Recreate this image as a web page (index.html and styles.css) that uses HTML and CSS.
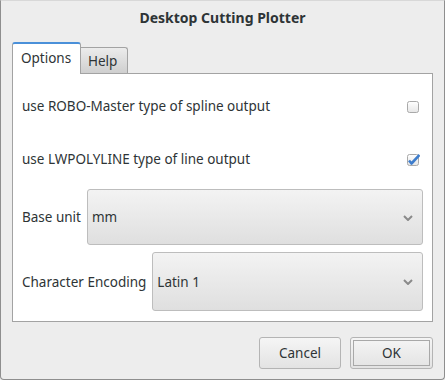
FILE: index.html
```html
<!DOCTYPE html>
<html>
<head>
<meta charset="utf-8">
<link rel="stylesheet" href="styles.css">
</head>
<body>
<div class="window">
  <div class="titlebar">Desktop Cutting Plotter</div>
  <div class="tabs">
    <div class="tab active">Options</div>
    <div class="tab">Help</div>
  </div>
  <div class="panel">
    <div class="row check-row r1">
      <span class="label">use ROBO-Master type of spline output</span>
      <svg class="checkbox" width="14" height="14" viewBox="0 0 14 14">
        <defs>
          <linearGradient id="cb1" x1="0" y1="0" x2="0" y2="1">
            <stop offset="0" stop-color="#ffffff"/>
            <stop offset="1" stop-color="#e6e6e6"/>
          </linearGradient>
        </defs>
        <rect x="1.5" y="1.5" width="11" height="11" rx="2" fill="url(#cb1)" stroke="#a9a9a9"/>
      </svg>
    </div>
    <div class="row check-row r2">
      <span class="label">use LWPOLYLINE type of line output</span>
      <svg class="checkbox" width="14" height="14" viewBox="0 0 14 14">
        <defs>
          <linearGradient id="cb2" x1="0" y1="0" x2="0" y2="1">
            <stop offset="0" stop-color="#ffffff"/>
            <stop offset="1" stop-color="#e6e6e6"/>
          </linearGradient>
        </defs>
        <rect x="1.5" y="1.5" width="11" height="11" rx="2" fill="url(#cb2)" stroke="#a9a9a9"/>
        <path d="M3 7.5 L5.5 10.5 L13.5 2" fill="none" stroke="#3e7dcc" stroke-width="2.6" stroke-linejoin="round"/>
      </svg>
    </div>
    <div class="row combo-row c1">
      <span class="label">Base unit</span>
      <div class="combo">
        <span>mm</span>
        <svg width="10" height="6" viewBox="0 0 10 6"><polyline points="1,1 5,5 9,1" fill="none" stroke="#8a8a8a" stroke-width="2"/></svg>
      </div>
    </div>
    <div class="row combo-row c2">
      <span class="label">Character Encoding</span>
      <div class="combo">
        <span>Latin 1</span>
        <svg width="10" height="6" viewBox="0 0 10 6"><polyline points="1,1 5,5 9,1" fill="none" stroke="#8a8a8a" stroke-width="2"/></svg>
      </div>
    </div>
  </div>
  <div class="buttons">
    <div class="btn">Cancel</div>
    <div class="btn default"><span>OK</span></div>
  </div>
</div>
</body>
</html>
```

FILE: styles.css
```css
html, body {
  margin: 0;
  padding: 0;
  background: #ededed;
}
body {
  font-family: "Noto Sans", "DejaVu Sans", sans-serif;
  font-size: 13.5px;
  color: #2e3436;
}
.window {
  width: 445px;
  height: 380px;
  box-sizing: border-box;
  border: 1px solid #8e8e8e;
  border-top-color: #d8d8d8;
  border-radius: 0 0 4px 4px;
  background: #ededed;
}
.titlebar {
  height: 32px;
  display: flex;
  align-items: center;
  justify-content: center;
  font-weight: bold;
  font-size: 14px;
  padding-top: 1px;
  box-sizing: border-box;
}
.tabs {
  display: flex;
  align-items: flex-end;
  height: 32px;
  box-sizing: border-box;
  margin: 9px 11px 0;
  border-bottom: 1px solid #a3a3a3;
}
.tab {
  box-sizing: border-box;
  height: 26px;
  width: 47px;
  border: 1px solid #a3a3a3;
  border-left: none;
  border-bottom: none;
  border-radius: 0 3px 0 0;
  background: linear-gradient(#ececec, #cfcfcf);
  padding-left: 7px;
  padding-top: 4px;
}
.tab.active {
  height: 32px;
  width: 69px;
  margin-bottom: -1px;
  border: 1px solid #a3a3a3;
  border-top: 2px solid #4a90d9;
  border-bottom: none;
  border-radius: 3px 3px 0 0;
  background: #ffffff;
  padding-left: 8px;
  padding-top: 5px;
}
.panel {
  margin: 0 11px;
  height: 248px;
  box-sizing: border-box;
  border: 1px solid #a3a3a3;
  border-top: none;
  background: #ffffff;
  padding: 6px 9px 10px 9px;
  display: flex;
  flex-direction: column;
}
.row {
  display: flex;
  align-items: center;
}
.check-row {
  justify-content: space-between;
}
.r1 { height: 52px; }
.r2 { height: 54px; }
.checkbox {
  margin-right: 3px;
  margin-top: 1px;
}
.combo-row {
  gap: 6px;
}
.c1 { height: 56px; margin-top: 3px; }
.c2 { height: 59px; margin-top: 7px; }
.combo {
  flex: 1;
  align-self: stretch;
  display: flex;
  align-items: center;
  justify-content: space-between;
  border: 1px solid #bdbdbd;
  border-radius: 3px;
  background: linear-gradient(#f3f3f3, #dfdfdf);
  padding: 0 9px 0 4px;
}
.combo svg {
  margin-top: 1px;
}
.buttons {
  display: flex;
  justify-content: flex-end;
  gap: 9px;
  margin: 15px 11px 0;
}
.btn {
  box-sizing: border-box;
  width: 82px;
  height: 32px;
  border: 1px solid #b4b4b4;
  border-radius: 3px;
  background: linear-gradient(#f5f5f5, #e3e3e3);
  display: flex;
  align-items: center;
  justify-content: center;
}
.btn.default {
  width: 83px;
  outline: 1px solid #a8a8a8;
  outline-offset: -4px;
}
```
